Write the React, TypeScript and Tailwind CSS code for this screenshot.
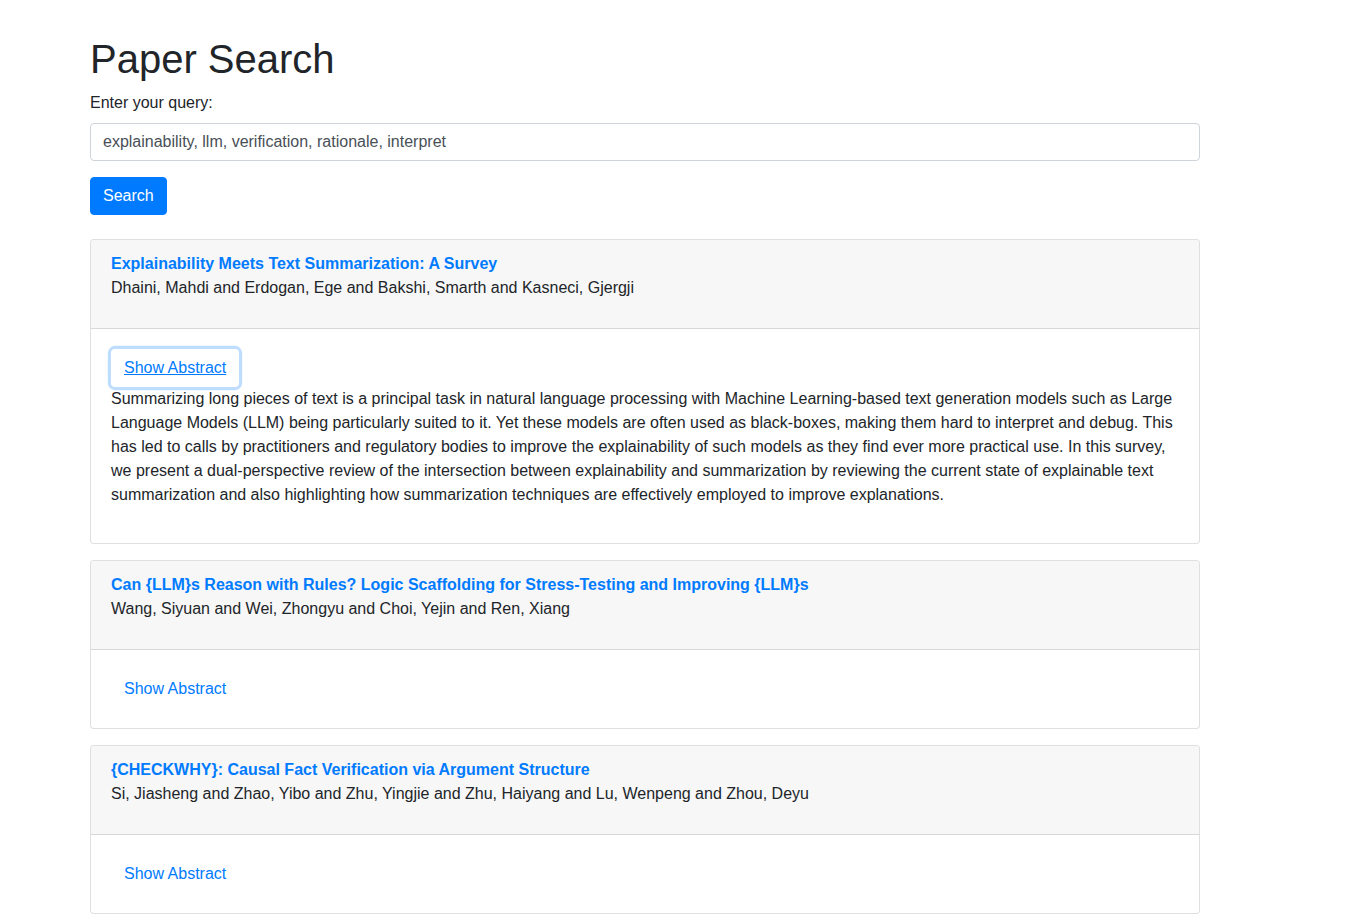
import React, { useState } from 'react';

interface Paper {
  title: string;
  authors: string;
  abstract: string;
}

const papers: Paper[] = [
  {
    title: 'Explainability Meets Text Summarization: A Survey',
    authors: 'Dhaini, Mahdi and Erdogan, Ege and Bakshi, Smarth and Kasneci, Gjergji',
    abstract:
      'Summarizing long pieces of text is a principal task in natural language processing with Machine Learning-based text generation models such as Large Language Models (LLM) being particularly suited to it. Yet these models are often used as black-boxes, making them hard to interpret and debug. This has led to calls by practitioners and regulatory bodies to improve the explainability of such models as they find ever more practical use. In this survey, we present a dual-perspective review of the intersection between explainability and summarization by reviewing the current state of explainable text summarization and also highlighting how summarization techniques are effectively employed to improve explanations.',
  },
  {
    title: 'Can {LLM}s Reason with Rules? Logic Scaffolding for Stress-Testing and Improving {LLM}s',
    authors: 'Wang, Siyuan and Wei, Zhongyu and Choi, Yejin and Ren, Xiang',
    abstract: '',
  },
  {
    title: '{CHECKWHY}: Causal Fact Verification via Argument Structure',
    authors: 'Si, Jiasheng and Zhao, Yibo and Zhu, Yingjie and Zhu, Haiyang and Lu, Wenpeng and Zhou, Deyu',
    abstract: '',
  },
];

const PaperCard: React.FC<{ paper: Paper; open: boolean; focused: boolean }> = ({ paper, open, focused }) => {
  const [show, setShow] = useState(open);

  return (
    <div className="mb-4 rounded border border-[rgba(0,0,0,0.125)] bg-white">
      <div className="rounded-t-[3px] border-b border-[rgba(0,0,0,0.125)] bg-[#f7f7f7] px-5 py-3">
        <a href="#" className="block font-bold text-[#007bff]">
          {paper.title}
        </a>
        <p className="mb-4">{paper.authors}</p>
      </div>
      <div className="p-5">
        <button
          onClick={() => setShow(!show)}
          className={`h-[38px] rounded border border-transparent px-3 text-[#007bff] ${
            focused ? 'underline shadow-[0_0_0_3.2px_rgba(0,123,255,0.25)]' : ''
          }`}
        >
          Show Abstract
        </button>
        {show && <p className="mb-4">{paper.abstract}</p>}
      </div>
    </div>
  );
};

export default function App() {
  const [query, setQuery] = useState('explainability, llm, verification, rationale, interpret');

  return (
    <div className="min-h-screen bg-white text-base leading-6 text-[#212529] font-['Liberation_Sans',Arial,sans-serif]">
      <div className="ml-[90px] w-[1110px] pt-[35px]">
        <h1 className="mb-2 text-[40px] font-medium leading-[48px]">Paper Search</h1>
        <label className="mb-2 block">Enter your query:</label>
        <input
          type="text"
          value={query}
          onChange={(e) => setQuery(e.target.value)}
          className="mb-4 block h-[38px] w-full rounded border border-[#ced4da] px-3 text-[#495057] outline-none"
        />
        <button className="mb-6 h-[38px] rounded border border-[#007bff] bg-[#007bff] px-3 text-white">
          Search
        </button>
        {papers.map((p, i) => (
          <PaperCard key={i} paper={p} open={i === 0} focused={i === 0} />
        ))}
      </div>
    </div>
  );
}
